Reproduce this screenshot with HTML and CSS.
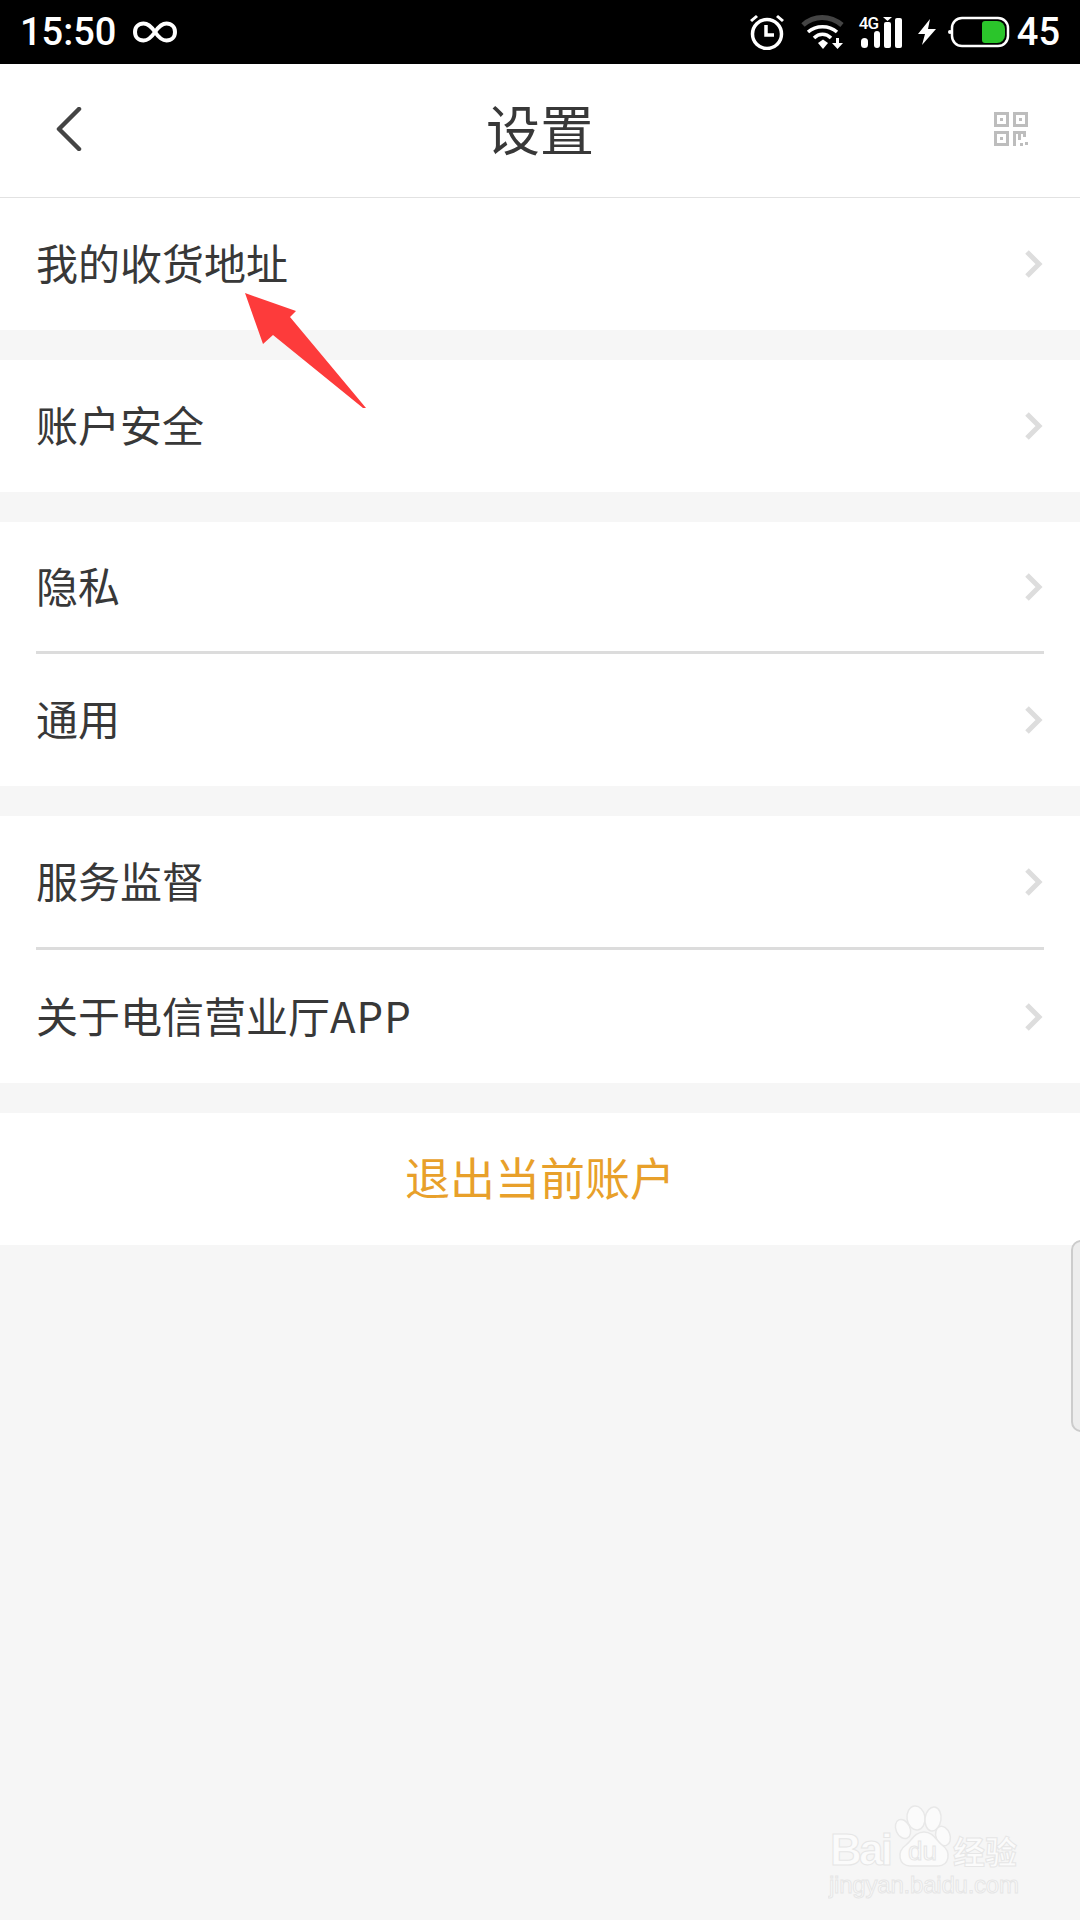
FILE: index.html
```html
<!DOCTYPE html>
<html lang="zh-CN">

<head>
    <meta charset="UTF-8">
    <meta name="viewport" content="width=device-width, initial-scale=1.0">
    <title>设置</title>
    <link rel="stylesheet" href="styles.css">
</head>

<body>
    <div class="statusbar">
        <div class="status-left">
            <span class="clock">15:50</span>
            <svg class="ic-loop" viewBox="0 0 46 24">
                <path d="M23 12C19 6 16 3.500 11.500 3.500 6.500 3.500 3 7 3 12S6.500 20.500 11.500 20.500C16 20.500 19 18 23 12S30 3.500 34.500 3.500C39.500 3.500 43 7 43 12S39.500 20.500 34.500 20.500C30 20.500 27 18 23 12Z" fill="none" stroke="#fff" stroke-width="4" />
            </svg>
        </div>
        <div class="status-right">
            <svg class="ic-alarm" viewBox="0 0 36 36">
                <circle cx="18" cy="20" r="14.500" fill="none" stroke="#fff" stroke-width="3.500" />
                <path d="M17 11v10h8" fill="none" stroke="#fff" stroke-width="3.500" />
                <path d="M1 6l6-5 2 2-6 5zM35 6l-6-5-2 2 6 5z" fill="#fff" />
            </svg>
            <svg class="ic-wifi" viewBox="0 0 44 36">
                <path d="M2 11C13 1 29 1 41 11" fill="none" stroke="#444" stroke-width="5" />
                <path d="M7 18C15 11 28 11 36 18" fill="none" stroke="#fff" stroke-width="3.500" />
                <path d="M13 24C18 19 25 19 30 24" fill="none" stroke="#fff" stroke-width="3.500" />
                <path d="M17 29l5-3.500 5 3.500-5 6z" fill="#fff" />
                <path d="M35 24h3v5h4l-5.500 6-5.500-6h4z" fill="#fff" />
            </svg>
            <div class="signal">
                <span class="net">4G</span>
                <svg class="ic-bars" viewBox="0 0 43 32">
                    <rect x="2" y="22" width="7" height="10" rx="3.500" fill="#fff" />
                    <rect x="15" y="15" width="6" height="17" rx="3" fill="#fff" />
                    <rect x="25" y="6" width="7" height="26" rx="2" fill="#fff" />
                    <path d="M24 1h9l-4.500 4z" fill="#fff" />
                    <rect x="36" y="2" width="7" height="30" rx="2" fill="#fff" />
                </svg>
            </div>
            <svg class="ic-bolt" viewBox="0 0 18 26">
                <path d="M12 0L0 15h7l-3 11L18 10h-8z" fill="#fff" />
            </svg>
            <svg class="ic-battery" viewBox="0 0 62 32">
                <circle cx="2" cy="16" r="2" fill="#fff" />
                <rect x="4" y="2" width="56" height="28" rx="10" fill="none" stroke="#fff" stroke-width="2.500" />
                <path d="M37 5h12a8 8 0 0 1 8 8v6a8 8 0 0 1-8 8H37a3 3 0 0 1-3-3V8a3 3 0 0 1 3-3z" fill="#2bc52b" />
            </svg>
            <span class="battery-num">45</span>
        </div>
    </div>

    <div class="topbar">
        <svg class="back" viewBox="0 0 26 44">
            <path d="M23 2L3 22l20 20" fill="none" stroke="#444" stroke-width="4.500" stroke-linecap="round" stroke-linejoin="round" />
        </svg>
        <h1 class="title">设置</h1>
        <svg class="qr" viewBox="0 0 34 34" fill="none" stroke="#bdbdbd" stroke-width="3">
            <rect x="1.500" y="1.500" width="12" height="12" />
            <rect x="20.500" y="1.500" width="12" height="12" />
            <rect x="1.500" y="20.500" width="12" height="12" />
            <path d="M20.500 34V20.500h5V28M25.500 20.500h5V25" />
            <g fill="#bdbdbd" stroke="none">
                <rect x="6" y="6" width="3" height="3" />
                <rect x="25" y="6" width="3" height="3" />
                <rect x="6" y="25" width="3" height="3" />
                <rect x="26" y="31" width="3" height="3" />
                <rect x="31" y="30" width="3" height="3" />
            </g>
        </svg>
    </div>

    <div class="group">
        <div class="row"><div class="row-in"><span class="label">我的收货地址</span><svg class="more" viewBox="0 0 20 30"><path d="M3 3l12 12L3 27" /></svg></div></div>
    </div>

    <div class="group">
        <div class="row"><div class="row-in"><span class="label">账户安全</span><svg class="more" viewBox="0 0 20 30"><path d="M3 3l12 12L3 27" /></svg></div></div>
    </div>

    <div class="group">
        <div class="row"><div class="row-in line"><span class="label">隐私</span><svg class="more" viewBox="0 0 20 30"><path d="M3 3l12 12L3 27" /></svg></div></div>
        <div class="row"><div class="row-in"><span class="label">通用</span><svg class="more" viewBox="0 0 20 30"><path d="M3 3l12 12L3 27" /></svg></div></div>
    </div>

    <div class="group">
        <div class="row"><div class="row-in line tall"><span class="label">服务监督</span><svg class="more" viewBox="0 0 20 30"><path d="M3 3l12 12L3 27" /></svg></div></div>
        <div class="row"><div class="row-in tall-end"><span class="label">关于电信营业厅<span class="latin">APP</span></span><svg class="more" viewBox="0 0 20 30"><path d="M3 3l12 12L3 27" /></svg></div></div>
    </div>

    <div class="group logout">退出当前账户</div>

    <div class="handle"></div>

    <svg class="arrow" viewBox="0 0 1080 1920">
        <polygon points="245,293 296,311 290,317 366,408 363,408 273,335 263,344" fill="#fd3b3b" />
    </svg>

    <svg class="watermark" viewBox="0 0 200 100">
        <g class="wm-shape">
            <ellipse cx="88" cy="16" rx="9" ry="12" transform="rotate(-8 88 16)" />
            <ellipse cx="105" cy="17" rx="8" ry="12" transform="rotate(8 105 17)" />
            <ellipse cx="75" cy="27" rx="7" ry="10" transform="rotate(-25 75 27)" />
            <ellipse cx="115" cy="34" rx="7" ry="10" transform="rotate(-20 115 34)" />
            <path d="M96 30C87 30 84 38 78 43 68 50 71 64 82 64H110C121 64 124 50 114 43 108 38 105 30 96 30Z" />
        </g>
        <text class="wm-bai" x="2" y="63" textLength="63">Bai</text>
        <text class="wm-du" x="80" y="58">du</text>
        <text class="wm-jy" x="125" y="62">经验</text>
        <text class="wm-url" x="1" y="91" textLength="190">jingyan.baidu.com</text>
    </svg>
</body>

</html>
```

FILE: styles.css
```css
body {
    margin: 0;
    width: 1080px;
    height: 1920px;
    position: relative;
    overflow: hidden;
    background-color: #f6f6f6;
    font-family: "Noto Sans CJK SC", "Noto Sans", sans-serif;
    color: #383838;
}

.statusbar {
    height: 64px;
    background-color: #000;
    color: #fff;
    display: flex;
    align-items: center;
    justify-content: space-between;
    padding: 0 20px;
    font-family: Roboto, sans-serif;
    font-weight: 500;
}

.status-left,
.status-right {
    display: flex;
    align-items: center;
}

.clock,
.battery-num {
    font-size: 38px;
    line-height: 64px;
}

.ic-loop {
    width: 46px;
    height: 24px;
    margin-left: 16px;
}

.ic-alarm {
    width: 36px;
    height: 36px;
}

.ic-wifi {
    width: 44px;
    height: 36px;
    margin-left: 16px;
}

.signal {
    position: relative;
    width: 43px;
    height: 32px;
    margin-left: 14px;
}

.net {
    position: absolute;
    left: 0;
    top: -1px;
    font-size: 17px;
    line-height: 16px;
    letter-spacing: -1px;
}

.ic-bars {
    display: block;
    width: 43px;
    height: 32px;
}

.ic-bolt {
    width: 18px;
    height: 26px;
    margin-left: 16px;
}

.ic-battery {
    width: 62px;
    height: 32px;
    margin-left: 12px;
}

.battery-num {
    margin-left: 7px;
}

.topbar {
    height: 133px;
    background-color: #fff;
    border-bottom: 1px solid #e2e2e2;
    display: flex;
    align-items: center;
    justify-content: space-between;
    padding: 0 52px 0 56px;
}

.back {
    width: 26px;
    height: 44px;
    margin-bottom: 3px;
}

.title {
    margin: 0 0 6px 4px;
    font-size: 54px;
    font-weight: 400;
    line-height: 60px;
}

.qr {
    width: 34px;
    height: 34px;
    margin-bottom: 3px;
}

.group {
    background-color: #fff;
    margin-bottom: 30px;
}

.row {
    padding: 0 36px;
}

.row-in {
    height: 132px;
    box-sizing: border-box;
    display: flex;
    align-items: center;
    justify-content: space-between;
    font-size: 42px;
}

.label {
    margin-bottom: 5px;
}

.latin {
    letter-spacing: 1px;
}

.line {
    border-bottom: 3px solid #dcdcdc;
}

.tall {
    height: 134px;
}

.tall-end {
    height: 133px;
}

.more {
    width: 20px;
    height: 30px;
    fill: none;
    stroke: #ddd;
    stroke-width: 5;
}

.logout {
    height: 132px;
    line-height: 128px;
    text-align: center;
    font-size: 45px;
    color: #e8a02a;
}

.handle {
    position: absolute;
    right: -11px;
    top: 1240px;
    width: 16px;
    height: 188px;
    background-color: #ededed;
    border: 2px solid #ccc;
    border-radius: 10px;
}

.arrow {
    position: absolute;
    left: 0;
    top: 0;
    width: 1080px;
    height: 1920px;
}

.watermark {
    position: absolute;
    left: 828px;
    top: 1802px;
    width: 200px;
    height: 100px;
}

.wm-shape ellipse,
.wm-shape path {
    fill: #fbfbfb;
    stroke: #e8e8e8;
    stroke-width: 1.500;
}

.watermark text {
    fill: #fbfbfb;
    stroke: #e6e6e6;
    stroke-width: 1;
    font-family: "Liberation Sans", sans-serif;
}

.watermark .wm-bai {
    font-size: 44px;
    font-weight: 700;
}

.watermark .wm-du {
    font-size: 26px;
}

.watermark .wm-jy {
    font-family: "Noto Sans CJK SC", sans-serif;
    font-size: 32px;
    font-weight: 700;
}

.watermark .wm-url {
    font-size: 24px;
}
```
